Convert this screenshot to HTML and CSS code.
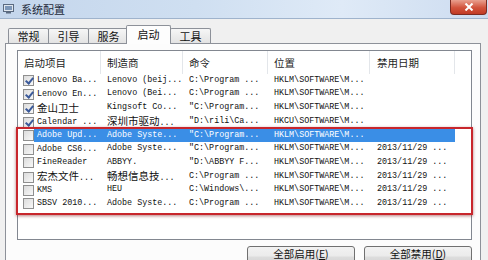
FILE: index.html
```html
<!DOCTYPE html>
<html>
<head>
<meta charset="utf-8">
<link rel="stylesheet" href="styles.css">
</head>
<body>
<div class="window">
  <div class="titlebar">
    <svg class="appicon" width="11" height="10" viewBox="0 0 11 10">
      <rect x="0.5" y="0.5" width="10" height="7" fill="#dfe6ee" stroke="#5a6a80"/>
      <rect x="2" y="2" width="7" height="4" fill="#7d97b8"/>
      <rect x="3" y="8" width="5" height="1.5" fill="#5a6a80"/>
    </svg>
    <span class="title">系统配置</span>
    <div class="close"><svg width="10" height="8" viewBox="0 0 10 8"><path d="M1.5 0.5 L8.5 7.5 M8.5 0.5 L1.5 7.5" stroke="#fff" stroke-width="2"/></svg></div>
  </div>
  <div class="client">
    <div class="tabs">
      <div class="tab">常规</div>
      <div class="tab">引导</div>
      <div class="tab">服务</div>
      <div class="tab active">启动</div>
      <div class="tab">工具</div>
    </div>
    <div class="panel">
      <div class="list">
        <div class="row header">
          <div class="c c1">启动项目</div>
          <div class="c c2">制造商</div>
          <div class="c c3">命令</div>
          <div class="c c4">位置</div>
          <div class="c c5">禁用日期</div>
          <div class="c c6"></div>
        </div>
        <div class="row"><div class="c c1"><span class="cb on"></span><span class="t">Lenovo Ba...</span></div><div class="c c2">Lenovo (beij...</div><div class="c c3">C:\Program ...</div><div class="c c4">HKLM\SOFTWARE\M...</div><div class="c c5"></div></div>
        <div class="row"><div class="c c1"><span class="cb on"></span><span class="t">Lenovo En...</span></div><div class="c c2">Lenovo (Bei...</div><div class="c c3">C:\Program ...</div><div class="c c4">HKLM\SOFTWARE\M...</div><div class="c c5"></div></div>
        <div class="row"><div class="c c1"><span class="cb on"></span><span class="t cjk">金山卫士</span></div><div class="c c2">Kingsoft Co...</div><div class="c c3">"C:\Program...</div><div class="c c4">HKLM\SOFTWARE\M...</div><div class="c c5"></div></div>
        <div class="row"><div class="c c1"><span class="cb on"></span><span class="t">Calendar ...</span></div><div class="c c2"><span class="cjk">深圳市驱动</span>...</div><div class="c c3">"D:\rili\Ca...</div><div class="c c4">HKCU\SOFTWARE\M...</div><div class="c c5"></div></div>
        <div class="row sel"><div class="c c1"><span class="cb"></span><span class="t">Adobe Upd...</span></div><div class="c c2">Adobe Syste...</div><div class="c c3">"C:\Program...</div><div class="c c4">HKLM\SOFTWARE\M...</div><div class="c c5"></div></div>
        <div class="row"><div class="c c1"><span class="cb"></span><span class="t">Adobe CS6...</span></div><div class="c c2">Adobe Syste...</div><div class="c c3">"C:\Program...</div><div class="c c4">HKLM\SOFTWARE\M...</div><div class="c c5">2013/11/29 ...</div></div>
        <div class="row"><div class="c c1"><span class="cb"></span><span class="t">FineReader</span></div><div class="c c2">ABBYY.</div><div class="c c3">"D:\ABBYY F...</div><div class="c c4">HKLM\SOFTWARE\M...</div><div class="c c5">2013/11/29 ...</div></div>
        <div class="row"><div class="c c1"><span class="cb"></span><span class="t"><span class="cjk">宏杰文件</span>...</span></div><div class="c c2"><span class="cjk">畅想信息技</span>...</div><div class="c c3">C:\Program ...</div><div class="c c4">HKLM\SOFTWARE\M...</div><div class="c c5">2013/11/29 ...</div></div>
        <div class="row"><div class="c c1"><span class="cb"></span><span class="t">KMS</span></div><div class="c c2">HEU</div><div class="c c3">C:\Windows\...</div><div class="c c4">HKLM\SOFTWARE\M...</div><div class="c c5">2013/11/29 ...</div></div>
        <div class="row"><div class="c c1"><span class="cb"></span><span class="t">SBSV 2010...</span></div><div class="c c2">Adobe Syste...</div><div class="c c3">C:\Program ...</div><div class="c c4">HKLM\SOFTWARE\M...</div><div class="c c5">2013/11/29 ...</div></div>
        <div class="redbox"></div>
      </div>
      <div class="buttons">
        <div class="btn">全部启用(<u>E</u>)</div>
        <div class="btn">全部禁用(<u>D</u>)</div>
      </div>
    </div>
  </div>
  <svg class="arrow" width="20" height="12" viewBox="0 0 20 12"><polygon points="2,12 10,2 18,12" fill="#4caf28" stroke="#2e8a12" stroke-width="1"/></svg>
</div>
</body>
</html>
```
FILE: styles.css
```css
html, body {
  margin: 0;
  padding: 0;
}
body {
  width: 488px;
  height: 260px;
  overflow: hidden;
  background: #f0f0f0;
  font-family: "Noto Sans CJK SC", "Noto Sans", sans-serif;
  color: #000;
}
.window {
  position: relative;
  width: 488px;
  height: 260px;
  background: #f0f0f0;
}
.titlebar {
  height: 18px;
  display: flex;
  align-items: center;
  background: linear-gradient(90deg, #c4d6ec 0%, #cfdff1 40%, #dfeaf7 70%, #cddcf0 100%);
  border-bottom: 1px solid #9fb3cc;
}
.appicon {
  margin-left: 3px;
  margin-right: 7px;
}
.title {
  font-size: 11px;
  line-height: 18px;
  color: #1e2a3a;
}
.close {
  margin-left: auto;
  margin-right: 1px;
  align-self: flex-start;
  width: 37px;
  height: 15px;
  display: flex;
  align-items: center;
  justify-content: center;
  background: linear-gradient(#e9a08f, #d2533c 55%, #c13b25);
  border: 1px solid #7c2b22;
  border-top: none;
  border-radius: 0 0 4px 4px;
  box-sizing: border-box;
}
.client {
  padding: 6px 7px 0 5px;
}
.tabs {
  display: flex;
  align-items: flex-end;
  height: 18px;
  padding-left: 3px;
  position: relative;
  z-index: 2;
}
.tab {
  height: 15px;
  width: 41px;
  box-sizing: border-box;
  border: 1px solid #8d9199;
  border-bottom: none;
  margin-right: -1px;
  background: linear-gradient(#f6f6f6, #e3e3e3);
  font-size: 11px;
  line-height: 14px;
  text-align: center;
  color: #111;
  border-radius: 2px 2px 0 0;
}
.tab.active {
  height: 19px;
  width: 45px;
  margin: 0 -1px -1px -2px;
  background: #fdfdfd;
  line-height: 17px;
  position: relative;
  z-index: 3;
}
.panel {
  width: 476px;
  height: 220px;
  box-sizing: border-box;
  border: 1px solid #8d9199;
  background: #fcfcfc;
  padding: 6px 0 0 11px;
  position: relative;
  z-index: 1;
}
.list {
  position: relative;
  width: 455px;
  height: 190px;
  box-sizing: border-box;
  border: 1px solid #828790;
  background: #fff;
}
.row {
  display: grid;
  grid-template-columns: 83px 82px 85px 102px 85px 1fr;
  height: 13.7px;
  font-family: "Liberation Mono", monospace;
  font-size: 8.4px;
  line-height: 13.7px;
  color: #111;
}
.row .c {
  white-space: nowrap;
  padding-left: 6px;
}
.row .c5 { padding-left: 7px; }
.row .c1 {
  display: flex;
  align-items: center;
  padding-left: 5px;
}
.header {
  height: 22px;
  margin-bottom: 0.8px;
  font-family: "Noto Sans CJK SC", sans-serif;
  font-size: 10.5px;
  line-height: 23px;
  color: #1e1e1e;
}
.header .c {
  border-right: 1px solid #e3e6ea;
}
.header .c1 { padding-left: 6px; }
.header .c6 { border-right: none; }
.t {
  white-space: nowrap;
  line-height: 13px;
}
.cjk {
  font-family: "Noto Sans CJK SC", sans-serif;
  font-size: 10.5px;
  line-height: 12px;
}
.cb {
  width: 11px;
  height: 11px;
  box-sizing: border-box;
  border: 1px solid #8f8f8f;
  background: linear-gradient(135deg, #dcdcdc, #f8f8f8);
  margin-right: 3px;
  flex: none;
  position: relative;
}
.cb.on::after {
  content: "";
  position: absolute;
  left: 3px;
  top: 0px;
  width: 3px;
  height: 6px;
  border: solid #3b5a9a;
  border-width: 0 2px 2px 0;
  transform: rotate(40deg);
}
.row.sel {
  background: linear-gradient(90deg, transparent 0, transparent 16px, #3a8ee6 16px, #3a8ee6 437px, transparent 437px);
  color: #fff;
}
.redbox {
  position: absolute;
  left: -2px;
  right: -2px;
  top: 76px;
  height: 88px;
  border: 2px solid #c8262c;
  box-shadow: 0 1px 3px rgba(120, 0, 0, 0.5);
  box-sizing: border-box;
  pointer-events: none;
}
.buttons {
  display: flex;
  justify-content: flex-end;
  gap: 9px;
  margin-top: 6px;
  padding-right: 8px;
}
.btn {
  width: 108px;
  height: 22px;
  box-sizing: border-box;
  border: 1px solid #707070;
  border-radius: 3px;
  background: linear-gradient(#f2f2f2 0, #ebebeb 45%, #dddddd 50%, #cfcfcf 100%);
  font-size: 10.5px;
  line-height: 12px;
  padding-top: 1px;
  text-align: center;
  color: #111;
}
.arrow {
  position: absolute;
  left: 356px;
  top: 249px;
}
```
